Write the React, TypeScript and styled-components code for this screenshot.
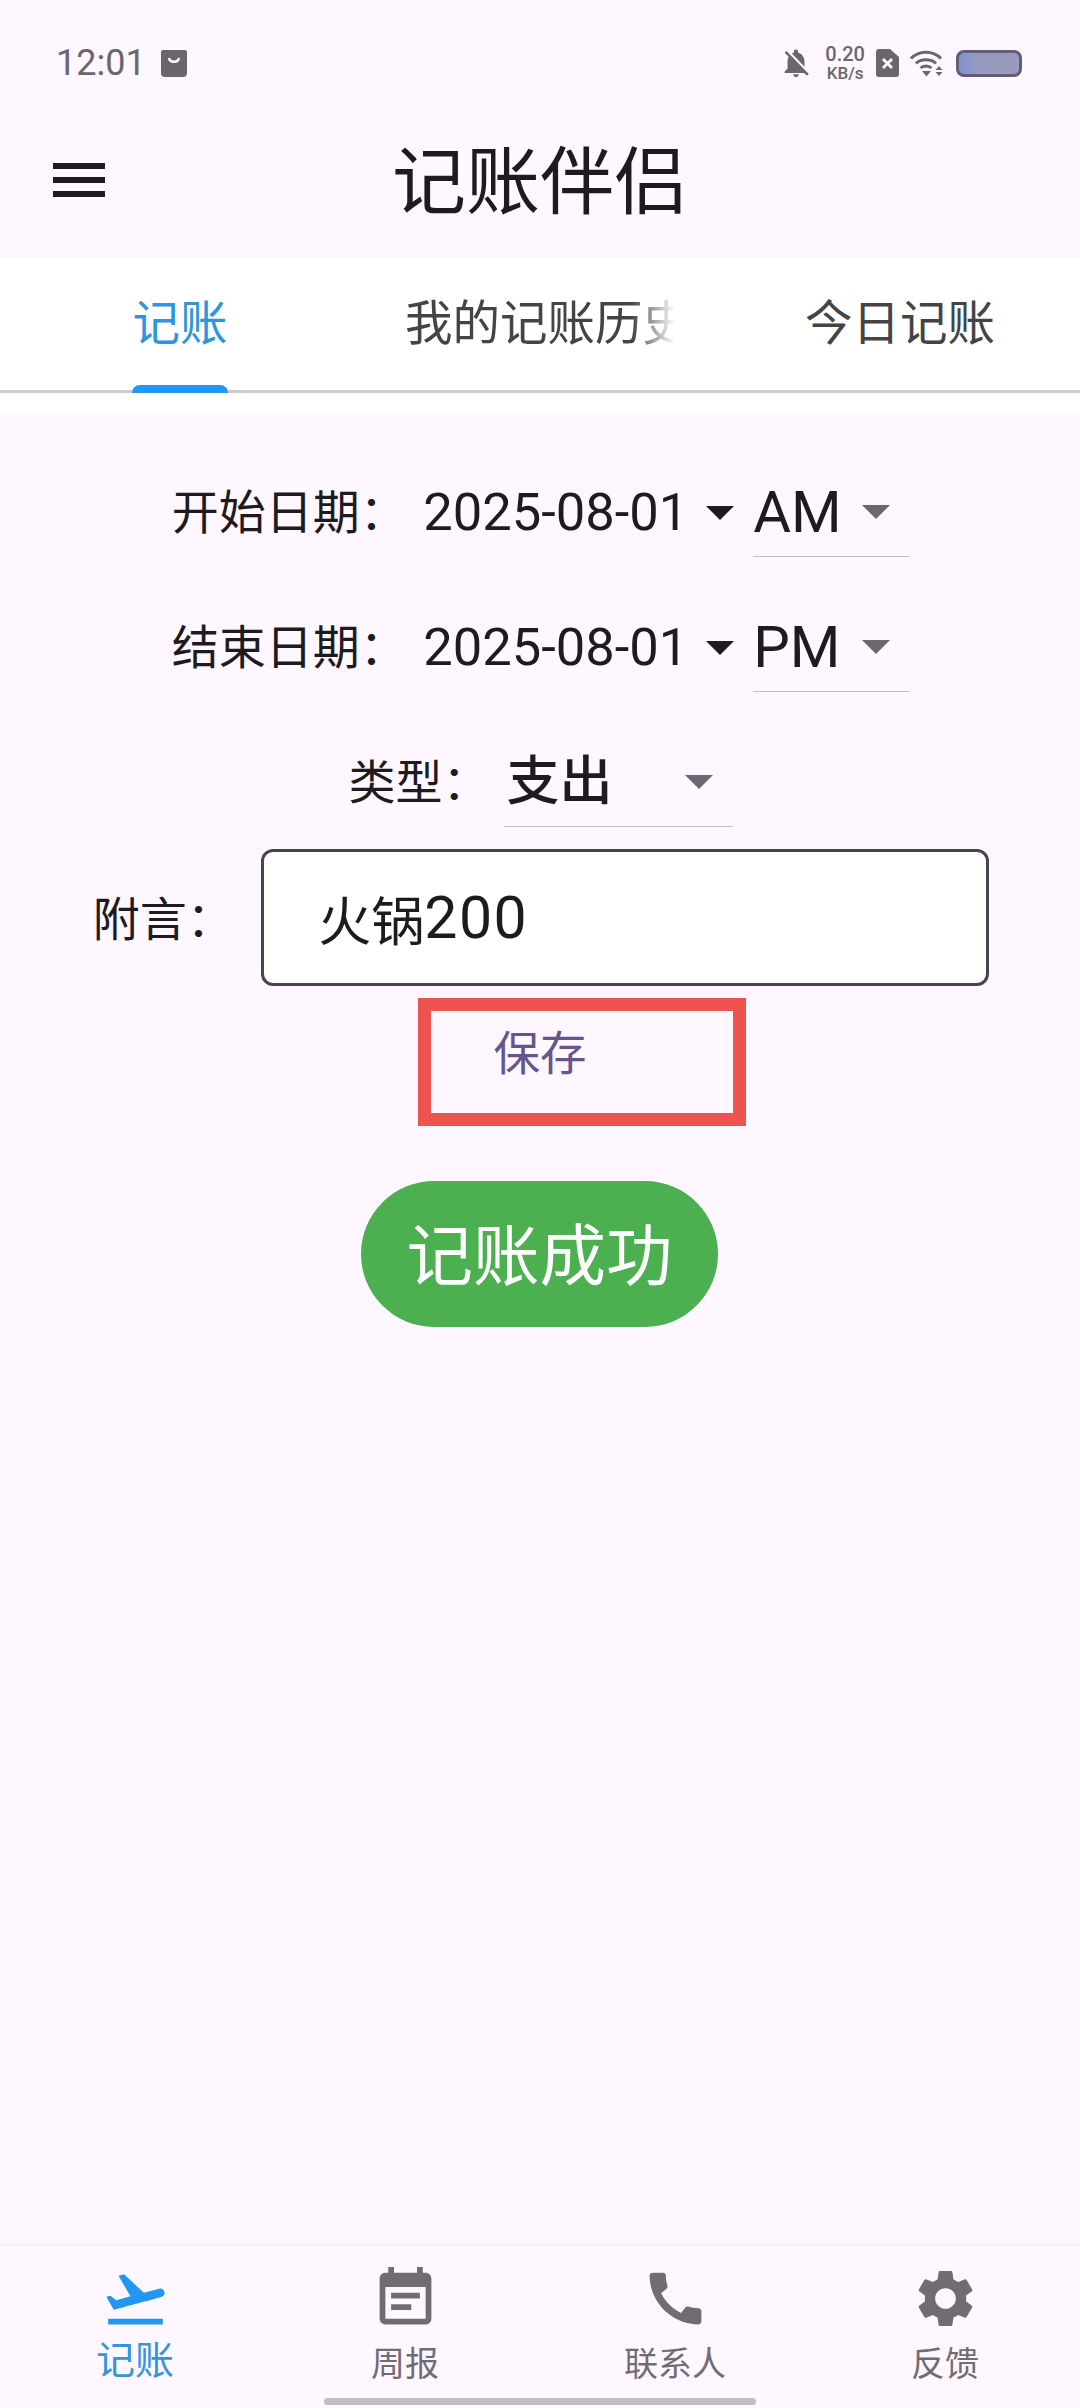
import styled, { createGlobalStyle } from 'styled-components';
import { MdCall, MdEventNote, MdFlightTakeoff, MdNotificationsOff, MdSettings } from 'react-icons/md';

const GlobalStyle = createGlobalStyle`
  html, body {
    margin: 0;
    padding: 0;
    background: #fef7ff;
  }
  body {
    font-family: "Noto Sans CJK SC", Roboto, sans-serif;
  }
`;

const SPage = styled.div`
  width: 1080px;
  height: 2408px;
  display: flex;
  flex-direction: column;
  position: relative;
  overflow: hidden;
  background: #fef7ff;
  color: #1d1b20;
`;

const SStatusBar = styled.div`
  height: 100px;
  padding: 26px 58px 0 56px;
  box-sizing: border-box;
  display: flex;
  align-items: center;
  justify-content: space-between;
  color: #6a666d;
`;

const SStatusGroup = styled.div`
  display: flex;
  align-items: center;
`;

const STime = styled.span`
  font-family: Roboto, sans-serif;
  font-size: 36px;
  margin-right: 15px;
`;

const SSpeed = styled.div`
  font-family: Roboto, sans-serif;
  font-weight: 500;
  text-align: center;
  margin: 0 11px 0 12px;
  span {
    display: block;
    font-size: 20px;
    line-height: 20px;
  }
  small {
    display: block;
    font-size: 17px;
    line-height: 17px;
    margin-top: 1px;
  }
`;

const SBattery = styled.div`
  width: 66px;
  height: 27px;
  margin: 0 0 0 12px;
  box-sizing: border-box;
  border: 3px solid #5f5e78;
  border-radius: 8px;
  background: linear-gradient(to right, #7f93d2 0, #9a9abf 18px);
`;

const SToolbar = styled.div`
  height: 158px;
  display: flex;
  align-items: center;
  justify-content: center;
  position: relative;
`;

const SMenuButton = styled.div`
  position: absolute;
  left: 53px;
  top: 63px;
  width: 52px;
  height: 34px;
  display: flex;
  flex-direction: column;
  justify-content: space-between;
  i {
    display: block;
    height: 6px;
    background: #1d1b20;
  }
`;

const STitle = styled.h1`
  margin: 0 0 6px 0;
  font-size: 74px;
  font-weight: 400;
  line-height: 100px;
`;

const STabBar = styled.div`
  height: 132px;
  display: grid;
  grid-template-columns: repeat(3, 360px);
  background: #fff;
  border-bottom: 3px solid #cccccc;
`;

const STab = styled.div<{ $active?: boolean }>`
  position: relative;
  display: flex;
  align-items: center;
  justify-content: center;
  padding-bottom: 10px;
  font-size: 47.5px;
  color: ${(p) => (p.$active ? '#2f96dc' : '#444444')};
`;

const STabLabel = styled.span<{ $fade?: boolean }>`
  display: block;
  white-space: nowrap;
  overflow: hidden;
  max-width: 270px;
  ${(p) => (p.$fade ? 'mask-image: linear-gradient(to right, #000 84%, transparent 100%);' : '')}
`;

const SIndicator = styled.div`
  position: absolute;
  left: 132px;
  bottom: -3px;
  width: 96px;
  height: 8px;
  background: #2196f3;
  border-radius: 8px 8px 0 0;
`;

const SWhiteStrip = styled.div`
  height: 20px;
  background: #fff;
`;

const SMain = styled.main`
  flex: 1;
  padding-top: 56px;
  display: flex;
  flex-direction: column;
  align-items: center;
  position: relative;
`;

const SFields = styled.div`
  display: flex;
  flex-direction: column;
  align-items: center;
  gap: 47px;
  padding-left: 2px;
`;

const SFieldRow = styled.div`
  height: 88px;
  display: flex;
  align-items: center;
`;

const SLabel = styled.span`
  font-size: 47px;
  line-height: 60px;
  margin-bottom: 9px;
  white-space: nowrap;
`;

const SDateValue = styled.div`
  display: flex;
  align-items: center;
  margin-left: 16.5px;
  margin-right: 19px;
  font-family: Roboto, sans-serif;
  font-size: 52.5px;
  gap: 18px;
`;

const SDateText = styled.span`
  margin-bottom: 2px;
`;

const SCaret = styled.i<{ $muted?: boolean }>`
  display: block;
  width: 0;
  height: 0;
  border-left: 14px solid transparent;
  border-right: 14px solid transparent;
  border-top: 14px solid ${(p) => (p.$muted ? '#6b6770' : '#1d1b20')};
`;

const SSelect = styled.div<{ $width: number; $cjk?: boolean }>`
  width: ${(p) => p.$width}px;
  height: 88px;
  margin-left: ${(p) => (p.$cjk ? 15 : 0)}px;
  box-sizing: border-box;
  padding: 0 20px 2px ${(p) => (p.$cjk ? 2 : 0)}px;
  border-bottom: 1.5px solid #c4c0c8;
  display: flex;
  align-items: center;
  justify-content: space-between;
`;

const SSelectValue = styled.span<{ $cjk?: boolean }>`
  font-family: ${(p) => (p.$cjk ? '"Noto Sans CJK SC"' : 'Roboto')}, sans-serif;
  font-size: ${(p) => (p.$cjk ? 53 : 58)}px;
  font-weight: ${(p) => (p.$cjk ? 500 : 400)};
  margin-bottom: ${(p) => (p.$cjk ? 9 : 0)}px;
`;

const SNoteRow = styled.div`
  margin-top: 22px;
  margin-left: 2px;
  display: flex;
  align-items: center;
  gap: 37.5px;
`;

const SNoteLabel = styled(SLabel)`
  width: 131px;
  margin-bottom: 3px;
`;

const SNoteInput = styled.div`
  width: 728px;
  height: 137px;
  box-sizing: border-box;
  padding: 0 56px 0 54px;
  display: flex;
  align-items: center;
  background: #fff;
  border: 3px solid #49454f;
  border-radius: 12px;
  font-size: 53px;
`;

const SNoteDigits = styled.span`
  font-family: Roboto, sans-serif;
  font-size: 59px;
  letter-spacing: 1.5px;
`;

const SSaveArea = styled.div`
  width: 100%;
  height: 128px;
  margin-top: 12px;
  display: flex;
  justify-content: center;
  padding-top: 19px;
  box-sizing: border-box;
  position: relative;
  font-size: 46.5px;
  line-height: 66px;
  color: #65558f;
`;

const SRedBox = styled.div`
  position: absolute;
  left: 418px;
  top: 0;
  width: 328px;
  height: 128px;
  box-sizing: border-box;
  border: 13px solid #ef5350;
`;

const SSuccessPill = styled.div`
  width: 357px;
  height: 146px;
  margin-top: 55px;
  margin-right: 1px;
  padding-bottom: 6px;
  box-sizing: border-box;
  display: flex;
  align-items: center;
  justify-content: center;
  border-radius: 73px;
  background: #4caf50;
  color: #fff;
  font-size: 66.5px;
`;

const SBottomNav = styled.nav`
  height: 165px;
  box-sizing: border-box;
  border-top: 3px solid #f6f0f8;
  padding-top: 18px;
  display: grid;
  grid-template-columns: repeat(4, 270px);
`;

const SNavItem = styled.div<{ $active?: boolean }>`
  display: flex;
  flex-direction: column;
  align-items: center;
  color: ${(p) => (p.$active ? '#2196f3' : '#716c74')};
`;

const SNavLabel = styled.span<{ $active?: boolean }>`
  font-size: ${(p) => (p.$active ? 39 : 34)}px;
  line-height: 46px;
  margin-top: ${(p) => (p.$active ? 1 : 6)}px;
  color: ${(p) => (p.$active ? '#3396dc' : '#716c74')};
`;

const SHomeBar = styled.div`
  position: absolute;
  left: 324px;
  bottom: 3px;
  width: 432px;
  height: 7px;
  border-radius: 4px;
  background: #c2bbc4;
`;

const BagIcon = () => (
  <svg width="26" height="28" viewBox="0 0 26 28">
    <path d="M2 1h22a2 2 0 0 1 2 2v21a4 4 0 0 1-4 4H4a4 4 0 0 1-4-4V3a2 2 0 0 1 2-2z" fill="#6a666d" />
    <path d="M8 9c.6 5 9.4 5 10 0" fill="none" stroke="#fef7ff" strokeWidth="2.4" />
  </svg>
);

const SimIcon = () => (
  <svg width="23" height="28" viewBox="0 0 23 28">
    <path d="M3 0h11l9 8v17a3 3 0 0 1-3 3H3a3 3 0 0 1-3-3V3a3 3 0 0 1 3-3z" fill="#6a666d" />
    <path d="M7 10l9 9M16 10l-9 9" stroke="#fef7ff" strokeWidth="2.8" />
  </svg>
);

const WifiIcon = () => (
  <svg width="34" height="27" viewBox="0 0 34 27" style={{ marginLeft: 11 }}>
    <g fill="none" stroke="#6a666d" strokeWidth="3">
      <path d="M1 8.5c8-8.5 22-8.5 30 0" />
      <path d="M6 13.5c5-5 15-5 20 0" />
      <path d="M10.5 18c3-2.8 8-2.8 11 0" />
    </g>
    <path d="M12 21h9l-4.5 5.5zM29 16l3.5 4h-7zM25.500 22h7L29 26z" fill="#6a666d" />
  </svg>
);

const TABS = ['记账', '我的记账历史', '今日记账'];

const NAV_ITEMS = [
  { label: '记账', Icon: MdFlightTakeoff, active: true },
  { label: '周报', Icon: MdEventNote },
  { label: '联系人', Icon: MdCall },
  { label: '反馈', Icon: MdSettings },
];

export default function App() {
  return (
    <SPage>
      <GlobalStyle />
      <SStatusBar>
        <SStatusGroup>
          <STime>12:01</STime>
          <BagIcon />
        </SStatusGroup>
        <SStatusGroup>
          <MdNotificationsOff size={34} />
          <SSpeed>
            <span>0.20</span>
            <small>KB/s</small>
          </SSpeed>
          <SimIcon />
          <WifiIcon />
          <SBattery />
        </SStatusGroup>
      </SStatusBar>

      <SToolbar>
        <SMenuButton>
          <i />
          <i />
          <i />
        </SMenuButton>
        <STitle>记账伴侣</STitle>
      </SToolbar>

      <STabBar>
        {TABS.map((tab, i) => (
          <STab key={tab} $active={i === 0}>
            <STabLabel $fade={i === 1}>{tab}</STabLabel>
            {i === 0 && <SIndicator />}
          </STab>
        ))}
      </STabBar>
      <SWhiteStrip />

      <SMain>
        <SFields>
          <SFieldRow>
            <SLabel>开始日期：</SLabel>
            <SDateValue>
              <SDateText>2025-08-01</SDateText>
              <SCaret />
            </SDateValue>
            <SSelect $width={157}>
              <SSelectValue>AM</SSelectValue>
              <SCaret $muted />
            </SSelect>
          </SFieldRow>
          <SFieldRow>
            <SLabel>结束日期：</SLabel>
            <SDateValue>
              <SDateText>2025-08-01</SDateText>
              <SCaret />
            </SDateValue>
            <SSelect $width={157}>
              <SSelectValue>PM</SSelectValue>
              <SCaret $muted />
            </SSelect>
          </SFieldRow>
          <SFieldRow>
            <SLabel>类型：</SLabel>
            <SSelect $width={229} $cjk>
              <SSelectValue $cjk>支出</SSelectValue>
              <SCaret $muted />
            </SSelect>
          </SFieldRow>
        </SFields>

        <SNoteRow>
          <SNoteLabel>附言：</SNoteLabel>
          <SNoteInput>
            火锅<SNoteDigits>200</SNoteDigits>
          </SNoteInput>
        </SNoteRow>

        <SSaveArea>
          保存
          <SRedBox />
        </SSaveArea>

        <SSuccessPill>记账成功</SSuccessPill>
      </SMain>

      <SBottomNav>
        {NAV_ITEMS.map(({ label, Icon, active }) => (
          <SNavItem key={label} $active={active}>
            <Icon size={69} />
            <SNavLabel $active={active}>{label}</SNavLabel>
          </SNavItem>
        ))}
      </SBottomNav>
      <SHomeBar />
    </SPage>
  );
}
